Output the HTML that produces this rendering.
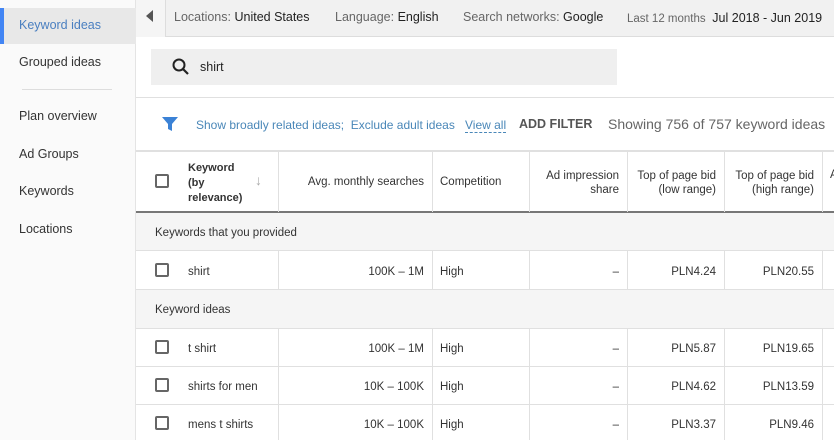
<!DOCTYPE html>
<html><head><style>
*{box-sizing:border-box;margin:0;padding:0}
body{width:834px;height:440px;overflow:hidden;font-family:"Liberation Sans",sans-serif;color:#333;background:#fff;position:relative;font-size:12px}
.abs{position:absolute}
.side{left:0;top:0;width:136px;height:440px;background:#fafafa;border-right:1px solid #e4e4e4}
.side div{position:absolute;left:19px;font-size:12.5px;color:#333}
.top{left:136px;top:0;width:698px;height:37px;background:#f1f1f1;border-bottom:1px solid #ddd;font-size:12.5px;color:#666}
.top span b{font-weight:normal;color:#222}
.cb{position:absolute;width:14px;height:14px;border:2px solid #666;border-radius:2px}
.vl{position:absolute;width:1px;background:#e0e0e0}
.hl{position:absolute;left:136px;width:698px;height:1px;background:#e0e0e0}
.t{position:absolute;font-size:11.5px;color:#333;white-space:nowrap}
.r{text-align:right}
.grp{position:absolute;left:136px;width:698px;background:#f5f5f5}
</style></head><body>
<div class="abs side">
<div style="left:0;top:8px;width:136px;height:36px;background:#e8e8e8"></div>
<div style="left:0;top:8px;width:4px;height:36px;background:#4285f4"></div>
<div style="top:18px;color:#4a7fc0">Keyword ideas</div>
<div style="top:55px">Grouped ideas</div>
<div style="left:22px;top:89px;width:90px;height:1px;background:#ddd"></div>
<div style="top:109px">Plan overview</div>
<div style="top:147px">Ad Groups</div>
<div style="top:184px">Keywords</div>
<div style="top:222px">Locations</div>
</div>
<div class="abs top">
<div class="abs" style="left:0;top:0;width:30px;height:37px;border-right:1px solid #ddd;background:#f5f5f5"></div>
<div class="abs" style="left:10px;top:10px;width:0;height:0;border-top:6px solid transparent;border-bottom:6px solid transparent;border-right:7px solid #555"></div>
<span class="abs" style="left:38px;top:10px">Locations: <b>United States</b></span>
<span class="abs" style="left:199px;top:10px">Language: <b>English</b></span>
<span class="abs" style="left:327px;top:10px">Search networks: <b>Google</b></span>
<span class="abs" style="left:491px;top:11px;font-size:11.5px">Last 12 months <b style="font-size:12.5px">&nbsp;Jul 2018 - Jun 2019</b></span>
</div>
<div class="abs" style="left:151px;top:49px;width:466px;height:36px;background:#efefef"></div>
<svg class="abs" style="left:171px;top:57px" width="20" height="20" viewBox="0 0 20 20"><circle cx="8" cy="8" r="5.5" fill="none" stroke="#222" stroke-width="2"/><path d="M12 12l5 5" stroke="#222" stroke-width="2.2"/></svg>
<div class="t" style="left:200px;top:60px;font-size:12.5px;color:#222">shirt</div>
<div class="hl" style="top:97px"></div>
<svg class="abs" style="left:162px;top:116px" width="16" height="16" viewBox="0 0 16 16"><path d="M0 1h16l-6 7v7l-4-2V8z" fill="#3b82d6"/></svg>
<div class="t" style="left:196px;top:118px;font-size:12px;color:#4a87b8">Show broadly related ideas;&nbsp; Exclude adult ideas</div>
<div class="t" style="left:465px;top:118px;font-size:12px;color:#4a87b8;border-bottom:1px dashed #4a87b8">View all</div>
<div class="t" style="left:519px;top:117px;font-size:12.5px;color:#555;font-weight:bold">ADD FILTER</div>
<div class="t" style="left:608px;top:116px;font-size:14px;color:#666">Showing 756 of 757 keyword ideas</div>
<div class="hl" style="top:150px;height:2px"></div>
<div class="hl" style="top:211px;height:2px;background:#777"></div>
<div class="cb" style="left:155px;top:174px"></div>
<div class="t" style="left:188px;top:161px;font-weight:bold;line-height:15px;font-size:11px">Keyword<br>(by<br>relevance)</div>
<div class="t" style="left:255px;top:172px;color:#aaa;font-size:14px">↓</div>
<div class="t r" style="left:280px;width:144px;top:176px">Avg. monthly searches</div>
<div class="t" style="left:440px;top:176px">Competition</div>
<div class="t r" style="left:530px;width:89px;top:169px;line-height:14px">Ad impression<br>share</div>
<div class="t r" style="left:628px;width:88px;top:169px;line-height:14px">Top of page bid<br>(low range)</div>
<div class="t r" style="left:725px;width:89px;top:169px;line-height:14px">Top of page bid<br>(high range)</div>
<div class="t" style="left:830px;top:169px">A</div>
<div class="grp" style="top:213px;height:37px"></div>
<div class="t" style="left:155px;top:227px">Keywords that you provided</div>
<div class="hl" style="top:250px"></div>
<div class="hl" style="top:289px"></div>
<div class="grp" style="top:290px;height:38px"></div>
<div class="t" style="left:155px;top:304px">Keyword ideas</div>
<div class="hl" style="top:328px"></div>
<div class="hl" style="top:366px"></div>
<div class="hl" style="top:404px"></div>
<div class="vl" style="left:278px;top:152px;height:60px"></div>
<div class="vl" style="left:432px;top:152px;height:60px"></div>
<div class="vl" style="left:529px;top:152px;height:60px"></div>
<div class="vl" style="left:627px;top:152px;height:60px"></div>
<div class="vl" style="left:724px;top:152px;height:60px"></div>
<div class="vl" style="left:822px;top:152px;height:60px"></div>
<div class="vl" style="left:278px;top:251px;height:38px"></div>
<div class="vl" style="left:432px;top:251px;height:38px"></div>
<div class="vl" style="left:529px;top:251px;height:38px"></div>
<div class="vl" style="left:627px;top:251px;height:38px"></div>
<div class="vl" style="left:724px;top:251px;height:38px"></div>
<div class="vl" style="left:822px;top:251px;height:38px"></div>
<div class="vl" style="left:278px;top:329px;height:111px"></div>
<div class="vl" style="left:432px;top:329px;height:111px"></div>
<div class="vl" style="left:529px;top:329px;height:111px"></div>
<div class="vl" style="left:627px;top:329px;height:111px"></div>
<div class="vl" style="left:724px;top:329px;height:111px"></div>
<div class="vl" style="left:822px;top:329px;height:111px"></div>

<div class="cb" style="left:155px;top:263px"></div>
<div class="t" style="left:188px;top:266px">shirt</div>
<div class="t r" style="left:280px;width:144px;top:266px">100K – 1M</div>
<div class="t" style="left:440px;top:266px">High</div>
<div class="t r" style="left:530px;width:89px;top:266px">–</div>
<div class="t r" style="left:628px;width:88px;top:266px">PLN4.24</div>
<div class="t r" style="left:725px;width:89px;top:266px">PLN20.55</div>

<div class="cb" style="left:155px;top:340px"></div>
<div class="t" style="left:188px;top:343px">t shirt</div>
<div class="t r" style="left:280px;width:144px;top:343px">100K – 1M</div>
<div class="t" style="left:440px;top:343px">High</div>
<div class="t r" style="left:530px;width:89px;top:343px">–</div>
<div class="t r" style="left:628px;width:88px;top:343px">PLN5.87</div>
<div class="t r" style="left:725px;width:89px;top:343px">PLN19.65</div>

<div class="cb" style="left:155px;top:378px"></div>
<div class="t" style="left:188px;top:381px">shirts for men</div>
<div class="t r" style="left:280px;width:144px;top:381px">10K – 100K</div>
<div class="t" style="left:440px;top:381px">High</div>
<div class="t r" style="left:530px;width:89px;top:381px">–</div>
<div class="t r" style="left:628px;width:88px;top:381px">PLN4.62</div>
<div class="t r" style="left:725px;width:89px;top:381px">PLN13.59</div>

<div class="cb" style="left:155px;top:416px"></div>
<div class="t" style="left:188px;top:419px">mens t shirts</div>
<div class="t r" style="left:280px;width:144px;top:419px">10K – 100K</div>
<div class="t" style="left:440px;top:419px">High</div>
<div class="t r" style="left:530px;width:89px;top:419px">–</div>
<div class="t r" style="left:628px;width:88px;top:419px">PLN3.37</div>
<div class="t r" style="left:725px;width:89px;top:419px">PLN9.46</div>
</body></html>
